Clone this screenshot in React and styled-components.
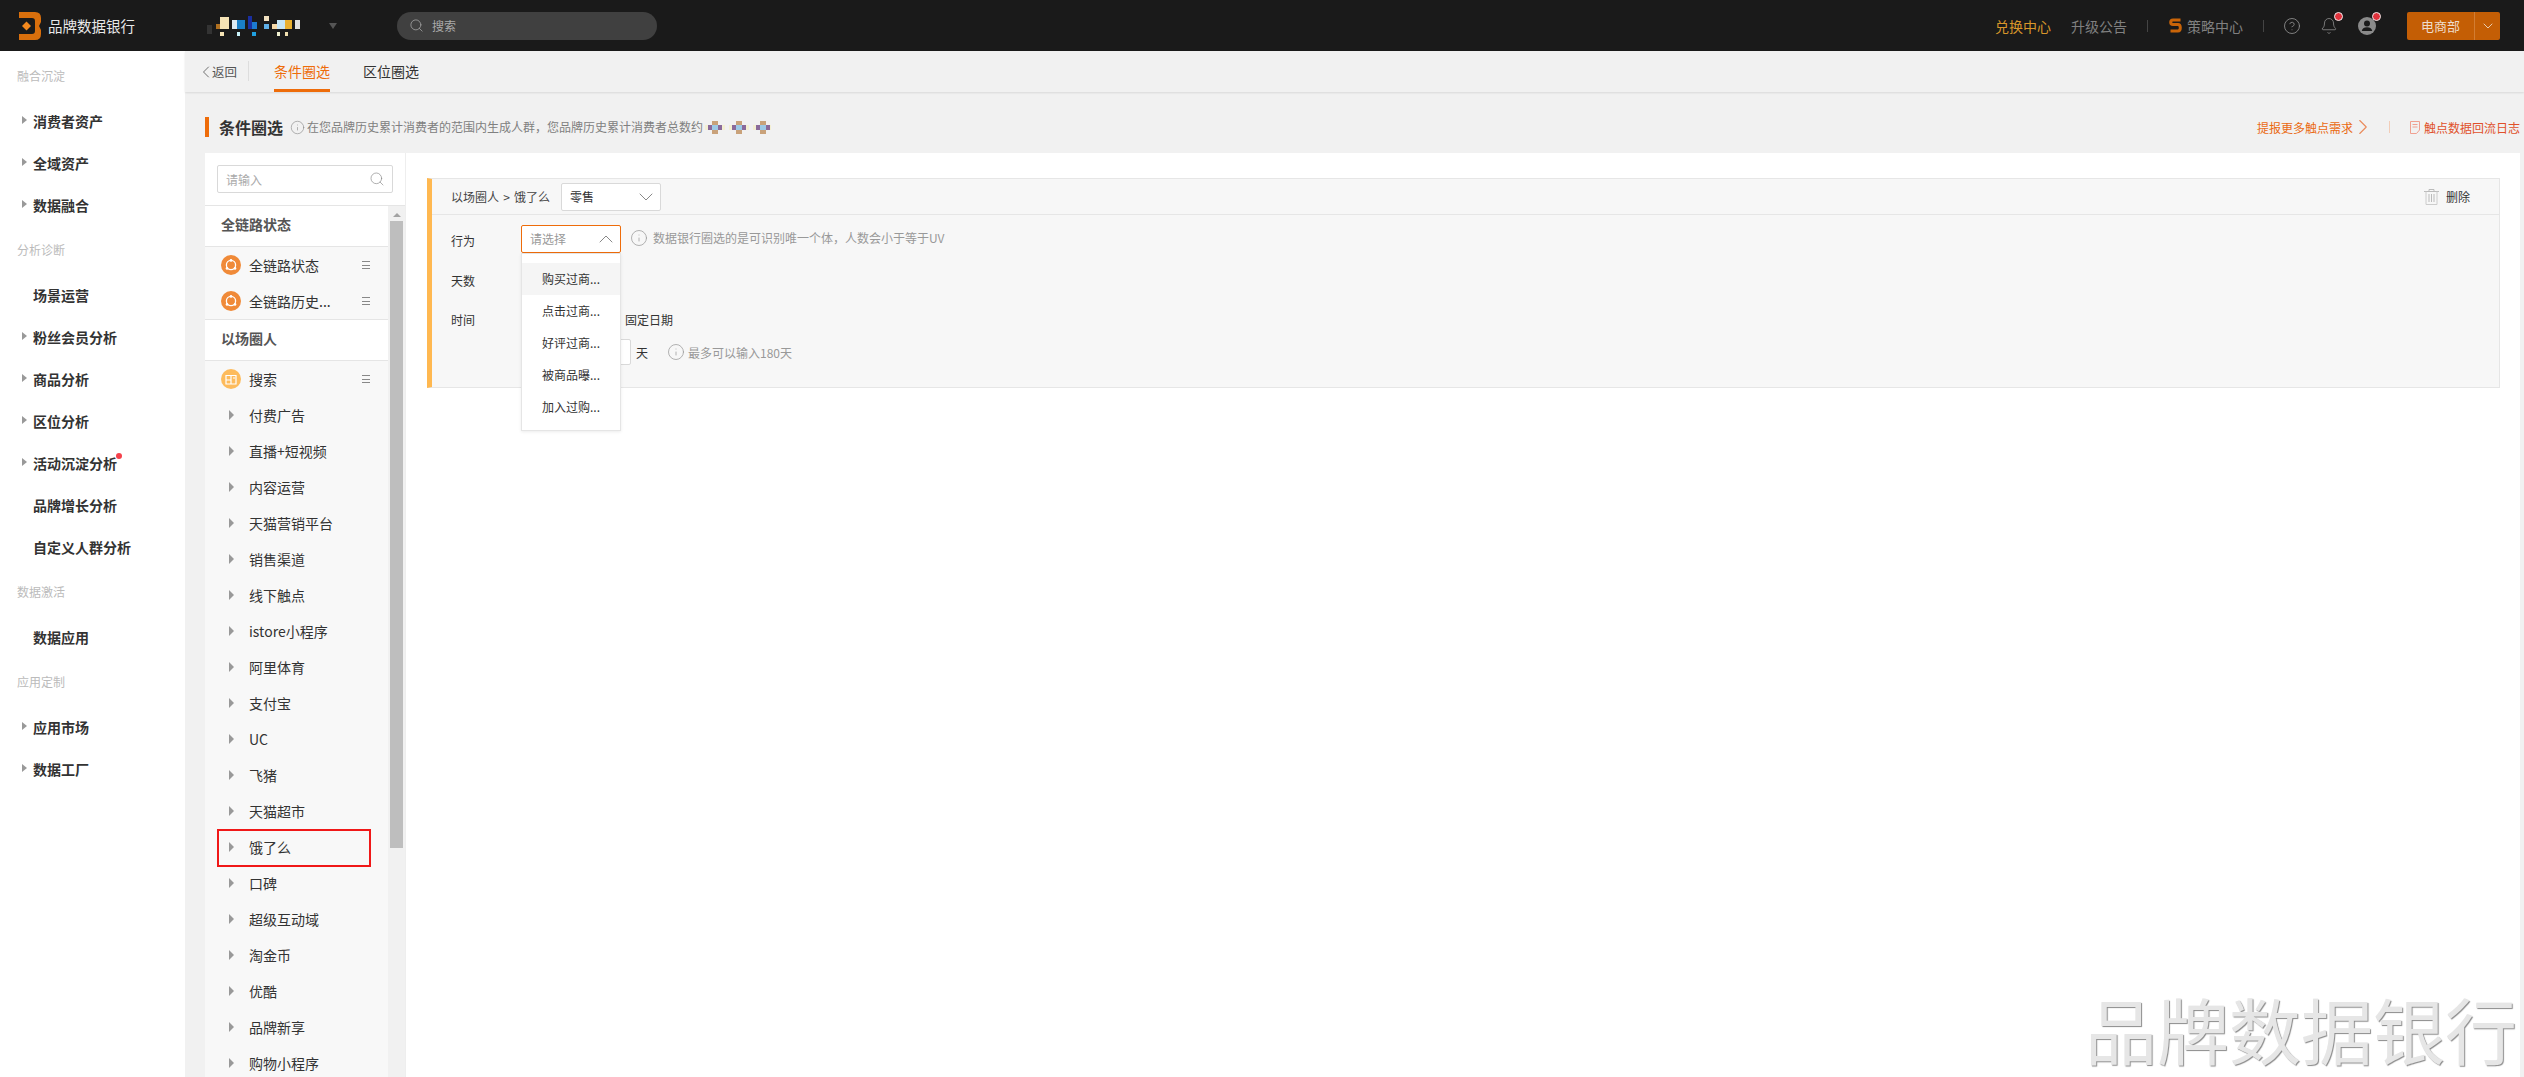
import { ChevronDown, ChevronLeft, ChevronRight, ChevronUp, CircleHelp, Bell, Info, Search } from 'lucide-react';
import styled, { createGlobalStyle } from 'styled-components';

const GlobalStyle = createGlobalStyle`
  html, body {
    margin: 0;
    padding: 0;
    background: #f1f1f1;
  }
  * {
    box-sizing: border-box;
  }
  body {
    font-family: "Noto Sans CJK SC", "Liberation Sans", sans-serif;
    font-size: 12px;
    color: #333;
  }
`;

const Page = styled.div`
  position: relative;
  width: 2524px;
  height: 1077px;
  overflow: hidden;
  display: flex;
  flex-direction: column;
`;

/* header */
const Header = styled.header`
  height: 51px;
  flex: none;
  background: #1a1a1a;
  display: flex;
  align-items: center;
  padding: 0 24px 0 19px;
`;
const LogoText = styled.span`
  margin-left: 7px;
  color: #e8e8e8;
  font-size: 14.5px;
`;
const BrandMark = styled.svg`
  margin-left: 67px;
  display: block;
`;
const BrandCaret = styled.i`
  margin-left: 27px;
  border-left: 4px solid transparent;
  border-right: 4px solid transparent;
  border-top: 6px solid #555;
`;
const SearchPill = styled.div`
  margin-left: 60px;
  width: 260px;
  height: 28px;
  border-radius: 14px;
  background: #404040;
  color: #aaa;
  display: flex;
  align-items: center;
  gap: 8px;
  padding-left: 12px;
  font-size: 12px;
`;
const HeaderRight = styled.div`
  margin-left: auto;
  display: flex;
  align-items: center;
  color: #808080;
  font-size: 14px;
`;
const HeaderLink = styled.span`
  color: ${(p) => p.$color || '#808080'};
  margin-left: ${(p) => p.$gap || 0}px;
`;
const HeaderDivider = styled.i`
  width: 1px;
  height: 12px;
  background: #444;
  margin: 0 ${(p) => p.$right || 20}px 0 20px;
`;
const IconDot = styled.span`
  position: relative;
  display: flex;
  margin-left: ${(p) => p.$gap || 0}px;
  &::after {
    content: '';
    display: ${(p) => (p.$dot ? 'block' : 'none')};
    position: absolute;
    right: -5px;
    top: -5px;
    width: 7px;
    height: 7px;
    border-radius: 50%;
    background: #e0323c;
    border: 1px solid #eee;
  }
`;
const OrgButton = styled.div`
  margin-left: 31px;
  width: 93px;
  height: 28px;
  background: #c45e05;
  border-radius: 2px;
  color: #eeddcc;
  font-size: 13px;
  display: flex;
  align-items: center;
`;
const OrgLabel = styled.span`
  width: 68px;
  text-align: center;
  border-right: 1px solid #d27d33;
  line-height: 28px;
`;
const OrgCaret = styled.span`
  flex: 1;
  display: flex;
  justify-content: center;
`;

/* sidebar */
const Body = styled.div`
  flex: 1;
  display: flex;
  min-height: 0;
`;
const Sidebar = styled.nav`
  width: 185px;
  flex: none;
  background: #fff;
  padding-top: 1px;
`;
const NavGroup = styled.div`
  height: 42px;
  line-height: 42px;
  margin: 3px 0;
  padding-left: 17px;
  color: #bbb;
  font-size: 12px;
`;
const NavItem = styled.div`
  position: relative;
  height: 42px;
  display: flex;
  align-items: center;
  padding-left: 33px;
  font-size: 14px;
  font-weight: 700;
  color: #333;
`;
const NavCaret = styled.i`
  position: absolute;
  left: 22px;
  top: 16px;
  border-top: 4px solid transparent;
  border-bottom: 4px solid transparent;
  border-left: 5px solid #999;
`;
const NavDot = styled.i`
  position: absolute;
  left: 116px;
  top: 11px;
  width: 6px;
  height: 6px;
  border-radius: 50%;
  background: #f5414b;
`;

/* main column */
const Main = styled.main`
  flex: 1;
  min-width: 0;
  display: flex;
  flex-direction: column;
  background: #f1f1f1;
`;
const TabBar = styled.div`
  height: 41px;
  flex: none;
  display: flex;
  align-items: stretch;
  padding-left: 15px;
  box-shadow: 0 1px 2px rgba(0, 0, 0, 0.1);
`;
const BackLink = styled.div`
  display: flex;
  align-items: center;
  color: #555;
  font-size: 12.5px;
  padding-right: 12px;
  position: relative;
  svg {
    margin: 0 -3.5px 0 -4.5px;
  }
  &::after {
    content: '';
    position: absolute;
    right: 0;
    top: 10px;
    height: 20px;
    width: 1px;
    background: #ddd;
  }
`;
const Tab = styled.div`
  margin-left: ${(p) => p.$gap}px;
  font-size: 14px;
  line-height: 41px;
  color: ${(p) => (p.$active ? '#ee6c0a' : '#333')};
  border-bottom: 3px solid ${(p) => (p.$active ? '#ee6c0a' : 'transparent')};
`;
const SectionHead = styled.div`
  height: 61px;
  flex: none;
  display: flex;
  align-items: flex-start;
  padding: 25px 4px 0 20px;
`;
const TitleBar = styled.i`
  width: 4px;
  height: 20px;
  background: #ee6c0a;
`;
const Title = styled.h1`
  margin: 0 7px 0 10px;
  font-size: 16px;
  line-height: 20px;
  font-weight: 700;
  color: #333;
`;
const Hint = styled.span`
  display: inline-flex;
  align-items: center;
  color: ${(p) => p.$color || '#808080'};
  font-size: 12px;
  line-height: 20px;
`;
const SectionLinks = styled.div`
  margin-left: auto;
  display: flex;
  align-items: center;
  height: 20px;
  font-size: 12px;
`;
const OrangeLink = styled.span`
  display: inline-flex;
  align-items: center;
  color: ${(p) => p.$color};
`;
const LinkDivider = styled.i`
  width: 1px;
  height: 12px;
  background: #f2cdb8;
  margin: 0 20px 0 13px;
`;

const Panel = styled.div`
  flex: 1;
  min-height: 0;
  margin: 0 4px 0 20px;
  display: flex;
  background: #fff;
`;
const LeftPane = styled.div`
  width: 201px;
  flex: none;
  border-right: 1px solid #eee;
  display: flex;
  flex-direction: column;
  min-height: 0;
`;
const LeftSearch = styled.div`
  height: 53px;
  flex: none;
  padding: 12px;
  border-bottom: 1px solid #e5e5e5;
`;
const LeftInput = styled.div`
  height: 28px;
  border: 1px solid #d9d9d9;
  border-radius: 2px;
  display: flex;
  align-items: center;
  justify-content: space-between;
  padding: 0 7px 0 8px;
  color: #aaa;
  font-size: 12px;
`;
const ListWrap = styled.div`
  flex: 1;
  min-height: 0;
  display: flex;
`;
const List = styled.div`
  flex: 1;
  min-width: 0;
  background: #f8f8f8;
`;
const ListHeader = styled.div`
  height: 41px;
  background: #fff;
  border-bottom: 1px solid #e5e5e5;
  padding: 0 0 4px 16px;
  display: flex;
  align-items: center;
  font-size: 14px;
  font-weight: 700;
  color: #555;
`;
const ListRow = styled.div`
  position: relative;
  height: 36px;
  display: flex;
  align-items: center;
  padding-left: ${(p) => (p.$icon ? 16 : 24)}px;
  font-size: 14px;
  color: #333;
  border-bottom: ${(p) => (p.$last ? '1px solid #e5e5e5' : 'none')};
  box-sizing: ${(p) => (p.$last ? 'content-box' : 'border-box')};
  &::after {
    content: '';
    display: ${(p) => (p.$marked ? 'block' : 'none')};
    position: absolute;
    left: 12px;
    right: 17px;
    top: 0;
    bottom: -2px;
    border: 2px solid #f01818;
  }
`;
const RowCaret = styled.i`
  border-top: 5px solid transparent;
  border-bottom: 5px solid transparent;
  border-left: 5px solid #999;
  margin-right: 15px;
`;
const RowIcon = styled.svg`
  margin-right: 8px;
  flex: none;
`;
const RowMenu = styled.span`
  margin-left: auto;
  margin-right: 18px;
  width: 8px;
  height: 8px;
  border-top: 1px solid #888;
  border-bottom: 1px solid #888;
  position: relative;
  &::after {
    content: '';
    position: absolute;
    left: 0;
    right: 0;
    top: 3px;
    height: 1px;
    background: #888;
  }
`;
const ScrollTrack = styled.div`
  width: 17px;
  flex: none;
  background: #f1f1f1;
  padding-top: 7px;
`;
const ScrollArrow = styled.i`
  display: block;
  width: 0;
  margin: 0 auto 4px;
  border-left: 4px solid transparent;
  border-right: 4px solid transparent;
  border-bottom: 4px solid #a3a3a3;
`;
const ScrollThumb = styled.div`
  height: 627px;
  width: 13px;
  margin-left: 2px;
  background: #bebebe;
`;

/* form */
const RightPane = styled.div`
  flex: 1;
  min-width: 0;
  padding: 25px 20px 0 21px;
`;
const FormCard = styled.section`
  height: 210px;
  background: #f7f7f7;
  border: 1px solid #e6e6e6;
  border-left: 5px solid #ffb850;
`;
const FormHead = styled.div`
  height: 36px;
  display: flex;
  align-items: center;
  padding: 0 29px 0 19px;
  border-bottom: 1px solid #e6e6e6;
  font-size: 12px;
  color: #444;
`;
const Crumb = styled.span`
  width: 110px;
  white-space: pre;
  word-spacing: 1.5px;
`;
const SelectBox = styled.div`
  position: relative;
  width: 100px;
  height: 28px;
  background: #fff;
  border: 1px solid ${(p) => (p.$open ? '#ee6c0a' : '#d9d9d9')};
  border-radius: 2px;
  display: flex;
  align-items: center;
  justify-content: space-between;
  padding: 0 2px 0 8px;
  color: ${(p) => (p.$open ? '#999' : '#333')};
  font-size: 12px;
  margin-bottom: ${(p) => (p.$open ? 3 : 0)}px;
`;
const Menu = styled.div`
  position: absolute;
  left: -1px;
  top: 27px;
  width: 100px;
  height: 178px;
  padding: 9px 0;
  background: #fff;
  border: 1px solid #e5e5e5;
  box-shadow: 0 1px 3px rgba(0, 0, 0, 0.08);
  z-index: 2;
`;
const MenuItem = styled.div`
  height: 32px;
  line-height: 32px;
  padding-left: 20px;
  color: #333;
  font-size: 12px;
  background: ${(p) => (p.$active ? '#f5f5f5' : 'transparent')};
`;
const DeleteLink = styled.span`
  margin-left: auto;
  display: flex;
  align-items: center;
  gap: 7px;
  color: #333;
`;
const FormBody = styled.div`
  padding: 5px 0 0 19px;
`;
const FieldRow = styled.div`
  height: ${(p) => p.$height || 40}px;
  display: flex;
  align-items: center;
  font-size: 12px;
  color: #333;
`;
const FieldLabel = styled.label`
  width: 70px;
  flex: none;
`;
const FieldHint = styled.span`
  display: inline-flex;
  align-items: center;
  color: #999;
  margin-left: ${(p) => p.$gap}px;
  gap: ${(p) => p.$inner}px;
  margin-bottom: ${(p) => p.$lift || 0}px;
`;
const FixedDate = styled.span`
  margin-left: 104px;
`;
const DaysInput = styled.div`
  width: 90px;
  height: 26px;
  margin: 0 5px 0 90px;
  background: #fff;
  border: 1px solid #d9d9d9;
  border-radius: 2px;
`;

/* overlays */
const WatermarkGrid = styled.div`
  position: absolute;
  inset: 0;
  pointer-events: none;
  display: grid;
  grid-template-columns: repeat(10, 240px);
  grid-auto-rows: 100px;
`;
const WatermarkCell = styled.span`
  align-self: start;
  justify-self: start;
  margin: 23px 0 0 11px;
  font-size: 14px;
  line-height: 20px;
  color: rgba(0, 0, 0, 0.022);
  white-space: nowrap;
  transform: rotate(-16deg);
`;
const BigWatermark = styled.div`
  position: absolute;
  right: 7px;
  bottom: 0;
  font-size: 72px;
  line-height: 98px;
  font-weight: 400;
  color: #e6e6e6;
  text-shadow: 1px 1px 1px #8a8a8a;
  white-space: nowrap;
  pointer-events: none;
`;

const NAV = [
  { group: '融合沉淀' },
  { label: '消费者资产', caret: true },
  { label: '全域资产', caret: true },
  { label: '数据融合', caret: true },
  { group: '分析诊断' },
  { label: '场景运营' },
  { label: '粉丝会员分析', caret: true },
  { label: '商品分析', caret: true },
  { label: '区位分析', caret: true },
  { label: '活动沉淀分析', caret: true, dot: true },
  { label: '品牌增长分析' },
  { label: '自定义人群分析' },
  { group: '数据激活' },
  { label: '数据应用' },
  { group: '应用定制' },
  { label: '应用市场', caret: true },
  { label: '数据工厂', caret: true },
];

const SCENES = [
  '付费广告',
  '直播+短视频',
  '内容运营',
  '天猫营销平台',
  '销售渠道',
  '线下触点',
  'istore小程序',
  '阿里体育',
  '支付宝',
  'UC',
  '飞猪',
  '天猫超市',
  '饿了么',
  '口碑',
  '超级互动域',
  '淘金币',
  '优酷',
  '品牌新享',
  '购物小程序',
];

const BEHAVIOURS = ['购买过商...', '点击过商...', '好评过商...', '被商品曝...', '加入过购...'];

const BRAND_PIXELS = [
  [5, 10, 5, 9, '#333333'],
  [14, 9, 4, 5, '#b07020'],
  [18, 2, 9, 12, '#f5e3b5'],
  [30, 5, 5, 9, '#dceaf3'],
  [35, 5, 8, 9, '#1a80c8'],
  [46, 1, 4, 13, '#1a2fa0'],
  [50, 7, 5, 7, '#1c7ad0'],
  [62, 1, 5, 5, '#f0e0c0'],
  [62, 9, 5, 5, '#5fb0e8'],
  [70, 9, 5, 5, '#f5d9a8'],
  [75, 5, 8, 9, '#c5e6f7'],
  [83, 5, 7, 9, '#e8b030'],
  [93, 5, 5, 9, '#e0e0e0'],
  [18, 17, 4, 4, '#f5e3b5'],
  [35, 17, 3, 4, '#c8f0f8'],
  [50, 17, 4, 4, '#20a0e0'],
  [75, 17, 3, 4, '#f0f0d0'],
  [83, 17, 3, 4, '#f0e0b0'],
];

const Logo = () => (
  <svg width="22" height="28" viewBox="0 0 22 28">
    <path
      d="M0 0H16Q22 0 22 6V10L20 14L22 18V22Q22 28 16 28H0V22H13Q16 22 16 19V9Q16 6 13 6H0Z"
      fill="#d96f0c"
    />
    <path d="M7.5 9.5L12 14L7.5 18.5L3 14Z" fill="#f58a1e" />
  </svg>
);

const StrategyIcon = () => (
  <svg width="13" height="15" viewBox="0 0 13 15">
    <path
      d="M11.5 2H4Q1.7 2 1.7 4.3T4 6.6H9Q11.3 6.6 11.3 9.8T9 13H1.5"
      fill="none"
      stroke="#c96408"
      strokeWidth="3"
    />
  </svg>
);

const AvatarIcon = () => (
  <svg width="18" height="18" viewBox="0 0 18 18">
    <circle cx="9" cy="9" r="9" fill="#8a8a8a" />
    <circle cx="9" cy="6.6" r="3" fill="#1a1a1a" />
    <path d="M3.8 14Q4.2 10.2 9 10.2T14.2 14Z" fill="#1a1a1a" />
  </svg>
);

const DocIcon = () => (
  <svg width="10" height="13" viewBox="0 0 10 13" style={{ marginRight: 4 }}>
    <path d="M.5.5H9.5V9L6.5 12.5H.5Z" fill="none" stroke="#f0a090" />
    <path d="M2.5 3.5H7.5M2.5 6H7.5" stroke="#f0a090" />
  </svg>
);

const TrashIcon = () => (
  <svg width="15" height="16" viewBox="0 0 15 16">
    <path d="M0 2.5H15M5 2.5V.5H10V2.5" fill="none" stroke="#bbb" />
    <path d="M2 2.5V15.5H13V2.5" fill="none" stroke="#ccc" />
    <path d="M5 5V13M7.5 5V13M10 5V13" stroke="#bbb" />
  </svg>
);

const FunnelIcon = () => (
  <RowIcon width="20" height="20" viewBox="0 0 20 20">
    <circle cx="10" cy="10" r="10" fill="#f08a38" />
    <circle cx="10" cy="10" r="4.6" fill="none" stroke="#fff" strokeWidth="1.3" />
    <circle cx="10" cy="5.4" r="1.3" fill="#fff" />
    <circle cx="6" cy="13.4" r="1.3" fill="#fff" />
    <circle cx="14" cy="13.4" r="1.3" fill="#fff" />
  </RowIcon>
);

const MapIcon = () => (
  <RowIcon width="20" height="20" viewBox="0 0 20 20">
    <circle cx="10" cy="10" r="10" fill="#fdbb5c" />
    <path
      d="M5 6.5H15V15H5ZM10 6.5V15M5 11H10M12 9H14"
      fill="none"
      stroke="#fff"
      strokeWidth="1.2"
    />
  </RowIcon>
);

const BlurredCount = () => (
  <svg width="68" height="14" viewBox="0 0 68 14">
    {[12, 36, 60].map((x) => (
      <g key={x}>
        <rect x={x - 10} y="5" width="20" height="5" fill="#f5efc0" opacity="0.6" />
        <rect x={x - 7} y="5" width="4" height="5" fill="#8a6a9a" />
        <rect x={x + 3} y="5" width="4" height="5" fill="#8a6a9a" />
        <rect x={x - 3} y="1" width="6" height="13" fill="#c9a27a" />
        <rect x={x - 3} y="5" width="6" height="5" fill="#9cc9e6" />
      </g>
    ))}
  </svg>
);

const App = () => {
  return (
    <Page>
      <GlobalStyle />
      <Header>
        <Logo />
        <LogoText>品牌数据银行</LogoText>
        <BrandMark width="100" height="22" viewBox="0 0 100 22">
          {BRAND_PIXELS.map(([x, y, w, h, fill]) => (
            <rect key={`${x}-${y}`} x={x} y={y} width={w} height={h} fill={fill} />
          ))}
        </BrandMark>
        <BrandCaret />
        <SearchPill>
          <Search size={15} strokeWidth={1.2} color="#aaa" />
          搜索
        </SearchPill>
        <HeaderRight>
          <HeaderLink $color="#d8962a">兑换中心</HeaderLink>
          <HeaderLink $gap={20}>升级公告</HeaderLink>
          <HeaderDivider $right={21} />
          <StrategyIcon />
          <HeaderLink $gap={5}>策略中心</HeaderLink>
          <HeaderDivider $right={19} />
          <CircleHelp size={18} strokeWidth={1.2} color="#8a8a8a" />
          <IconDot $gap={19} $dot>
            <Bell size={18} strokeWidth={1.1} color="#8a8a8a" />
          </IconDot>
          <IconDot $gap={20} $dot>
            <AvatarIcon />
          </IconDot>
          <OrgButton>
            <OrgLabel>电商部</OrgLabel>
            <OrgCaret>
              <ChevronDown size={16} strokeWidth={1.3} color="#eeddcc" />
            </OrgCaret>
          </OrgButton>
        </HeaderRight>
      </Header>

      <Body>
        <Sidebar>
          {NAV.map((item) =>
            item.group ? (
              <NavGroup key={item.group}>{item.group}</NavGroup>
            ) : (
              <NavItem key={item.label}>
                {item.caret && <NavCaret />}
                <span>{item.label}</span>
                {item.dot && <NavDot />}
              </NavItem>
            )
          )}
        </Sidebar>

        <Main>
          <TabBar>
            <BackLink>
              <ChevronLeft size={20} strokeWidth={1} color="#555" />
              返回
            </BackLink>
            <Tab $gap={25} $active>
              条件圈选
            </Tab>
            <Tab $gap={33}>区位圈选</Tab>
          </TabBar>

          <SectionHead>
            <TitleBar />
            <Title>条件圈选</Title>
            <Hint>
              <Info size={15} strokeWidth={1} color="#888" style={{ marginRight: 2 }} />
              在您品牌历史累计消费者的范围内生成人群，您品牌历史累计消费者总数约
              <BlurredCount />
            </Hint>
            <SectionLinks>
              <OrangeLink $color="#ea6a12">
                提报更多触点需求
                <ChevronRight size={26} strokeWidth={1} color="#ea8a5a" style={{ marginLeft: -3 }} />
              </OrangeLink>
              <LinkDivider />
              <OrangeLink $color="#e0502a">
                <DocIcon />
                触点数据回流日志
              </OrangeLink>
            </SectionLinks>
          </SectionHead>

          <Panel>
            <LeftPane>
              <LeftSearch>
                <LeftInput>
                  请输入
                  <Search size={16} strokeWidth={1} color="#888" />
                </LeftInput>
              </LeftSearch>
              <ListWrap>
                <List>
                  <ListHeader>全链路状态</ListHeader>
                  <ListRow $icon>
                    <FunnelIcon />
                    全链路状态
                    <RowMenu />
                  </ListRow>
                  <ListRow $icon $last>
                    <FunnelIcon />
                    全链路历史...
                    <RowMenu />
                  </ListRow>
                  <ListHeader>以场圈人</ListHeader>
                  <ListRow $icon>
                    <MapIcon />
                    搜索
                    <RowMenu />
                  </ListRow>
                  {SCENES.map((name) => (
                    <ListRow key={name} $marked={name === '饿了么'}>
                      <RowCaret />
                      {name}
                    </ListRow>
                  ))}
                </List>
                <ScrollTrack>
                  <ScrollArrow />
                  <ScrollThumb />
                </ScrollTrack>
              </ListWrap>
            </LeftPane>

            <RightPane>
              <FormCard>
                <FormHead>
                  <Crumb>以场圈人 &gt; 饿了么</Crumb>
                  <SelectBox>
                    零售
                    <ChevronDown size={24} strokeWidth={1} color="#888" />
                  </SelectBox>
                  <DeleteLink>
                    <TrashIcon />
                    删除
                  </DeleteLink>
                </FormHead>
                <FormBody>
                  <FieldRow>
                    <FieldLabel>行为</FieldLabel>
                    <SelectBox $open>
                      请选择
                      <ChevronUp size={24} strokeWidth={1} color="#888" />
                      <Menu>
                        {BEHAVIOURS.map((text, i) => (
                          <MenuItem key={text} $active={i === 0}>
                            {text}
                          </MenuItem>
                        ))}
                      </Menu>
                    </SelectBox>
                    <FieldHint $gap={9} $inner={5} $lift={5}>
                      <Info size={18} strokeWidth={1} color="#999" />
                      数据银行圈选的是可识别唯一个体，人数会小于等于UV
                    </FieldHint>
                  </FieldRow>
                  <FieldRow>
                    <FieldLabel>天数</FieldLabel>
                  </FieldRow>
                  <FieldRow $height={39}>
                    <FieldLabel>时间</FieldLabel>
                    <FixedDate>固定日期</FixedDate>
                  </FieldRow>
                  <FieldRow $height={26}>
                    <DaysInput />
                    天
                    <FieldHint $gap={19} $inner={3}>
                      <Info size={18} strokeWidth={1} color="#999" />
                      最多可以输入180天
                    </FieldHint>
                  </FieldRow>
                </FormBody>
              </FormCard>
            </RightPane>
          </Panel>
        </Main>
      </Body>

      <WatermarkGrid>
        {Array.from({ length: 100 }, (_, i) => (
          <WatermarkCell key={i}>aptamil/爱他美_w00116823</WatermarkCell>
        ))}
      </WatermarkGrid>
      <BigWatermark>品牌数据银行</BigWatermark>
    </Page>
  );
};

export default App;
